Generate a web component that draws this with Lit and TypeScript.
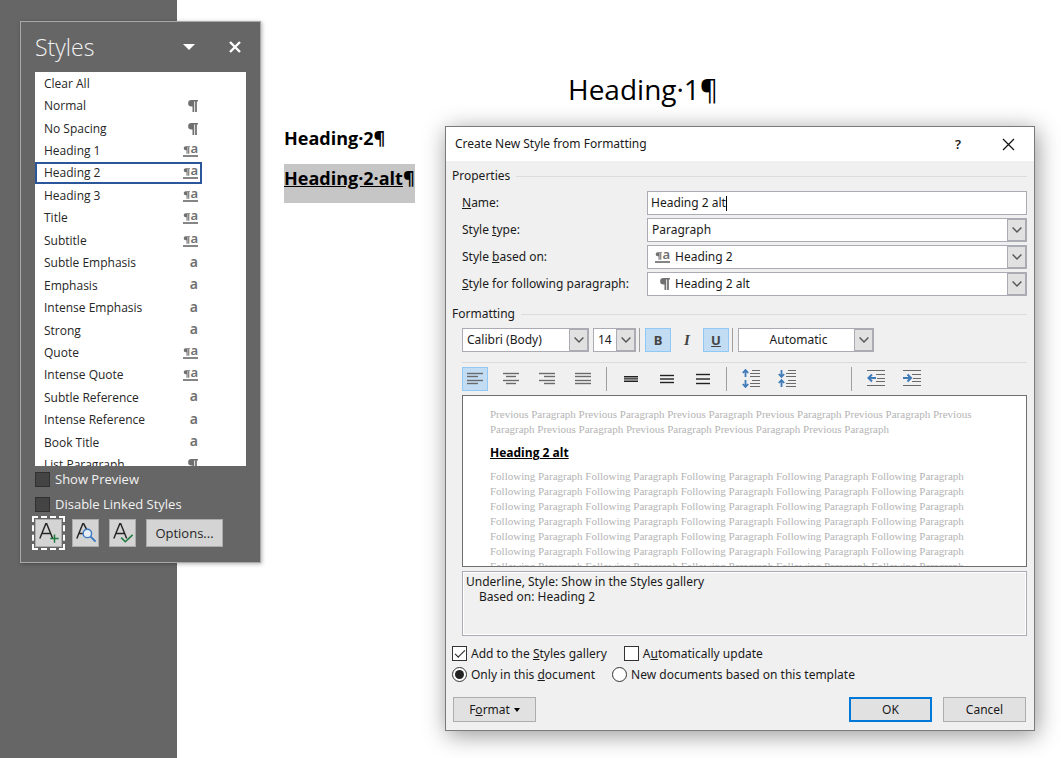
import { LitElement, html, svg, css, nothing } from "lit";
import { customElement, property, state } from "lit/decorators.js";
import { classMap } from "lit/directives/class-map.js";

type Kind = "none" | "para" | "linked" | "char";

const STYLES: Array<[string, Kind]> = [
  ["Clear All", "none"],
  ["Normal", "para"],
  ["No Spacing", "para"],
  ["Heading 1", "linked"],
  ["Heading 2", "linked"],
  ["Heading 3", "linked"],
  ["Title", "linked"],
  ["Subtitle", "linked"],
  ["Subtle Emphasis", "char"],
  ["Emphasis", "char"],
  ["Intense Emphasis", "char"],
  ["Strong", "char"],
  ["Quote", "linked"],
  ["Intense Quote", "linked"],
  ["Subtle Reference", "char"],
  ["Intense Reference", "char"],
  ["Book Title", "char"],
  ["List Paragraph", "para"],
];

/** Small mark telling paragraph, character and linked styles apart. */
@customElement("style-mark")
export class StyleMark extends LitElement {
  @property() kind: Kind = "none";

  static styles = css`
    :host {
      display: flex;
      justify-content: flex-end;
      width: 16px;
      color: #707070;
      font: 600 14px/16px "Noto Sans", sans-serif;
    }
    .pilcrow {
      display: block;
    }
    .linked {
      font-size: 13px;
      line-height: 10px;
      height: 10px;
      display: flex;
      align-items: center;
      border-bottom: 2px solid #858585;
    }
    .linked .glyph {
      padding-bottom: 4px;
    }
    .letter {
      height: 16px;
      margin-top: -3px;
    }
  `;

  private pilcrow(w: number, h: number) {
    return html`<svg class="pilcrow" width=${w} height=${h} viewBox="0 0 10 11">
      <path d="M4 0H10V1.3H9V11H7.4V1.3H6.600V11H5V6H4A3 3 0 0 1 4 0Z" fill="currentColor" />
    </svg>`;
  }

  render() {
    if (this.kind === "para") return this.pilcrow(11, 12);
    if (this.kind === "char") return html`<span class="letter">a</span>`;
    if (this.kind === "linked") return html`<span class="linked">${this.pilcrow(7, 8)}<span class="glyph">a</span></span>`;
    return nothing;
  }
}

@customElement("styles-pane")
export class StylesPane extends LitElement {
  @state() private selected = "Heading 2";

  static styles = css`
    :host {
      display: block;
      box-sizing: border-box;
      border: 1px solid #a8a8a8;
      background: #666;
      box-shadow: 1px 1px 4px rgba(0, 0, 0, 0.3);
      padding: 0 14px 15px;
      color: #f2f2f2;
      font: 12px/16px "Open Sans", sans-serif;
    }
    button {
      font: inherit;
      margin: 0;
      padding: 0;
    }
    header {
      display: flex;
      align-items: center;
      height: 50px;
      gap: 32px;
    }
    h2 {
      flex: 1;
      margin: 0;
      font-size: 23px;
      font-weight: 300;
      line-height: 28px;
    }
    .plain {
      display: grid;
      place-items: center;
      width: 14px;
      height: 14px;
      border: 0;
      background: none;
      color: #fff;
    }
    .plain:last-child {
      margin-right: 4px;
    }
    .view {
      height: 394px;
      overflow: hidden;
      background: #fff;
    }
    ul {
      display: flex;
      flex-direction: column;
      height: 404px;
      margin: 0;
      padding: 0;
      list-style: none;
    }
    li {
      flex: 1;
      display: flex;
    }
    .item {
      display: flex;
      align-items: center;
      justify-content: space-between;
      width: 167px;
      border: 2px solid transparent;
      padding: 1px 2px 0 7px;
      background: none;
      color: #262626;
      text-align: left;
    }
    .item.on {
      border-color: #2b579a;
    }
    .checks {
      display: grid;
      gap: 9px;
      padding-top: 5px;
    }
    label {
      display: flex;
      align-items: center;
      gap: 5px;
      font-size: 13px;
    }
    input {
      appearance: none;
      box-sizing: border-box;
      width: 15px;
      height: 15px;
      margin: 0;
      border: 1px solid #303030;
      background: #444;
    }
    input:checked {
      background: #ddd;
    }
    .actions {
      display: flex;
      gap: 10px;
      padding-top: 7px;
    }
    .tool,
    .options {
      display: grid;
      place-items: center;
      height: 28px;
      border: 1px solid #ababab;
      background: #d4d4d4;
      color: #262626;
    }
    .tool {
      width: 27px;
    }
    .tool.focus {
      outline: 2px dashed #fff;
      outline-offset: 1px;
    }
    .options {
      width: 77px;
      font-size: 13px;
    }
  `;

  render() {
    const letter = svg`<path d="M2 18 8.5 2h1L16 18M4.4 12.5h9.2" fill="none" stroke="#262626" stroke-width="1.6" />`;
    const shortLetter = svg`<path d="M2 18 8.5 2h1l3.200 6M4.400 12.500h4.200" fill="none" stroke="#262626" stroke-width="1.6" />`;
    return html`
      <header>
        <h2>Styles</h2>
        <button class="plain" aria-label="Task pane options">
          <svg width="12" height="6" viewBox="0 0 12 6"><path d="M0 0h12L6 6Z" fill="currentColor" /></svg>
        </button>
        <button class="plain" aria-label="Close">
          <svg width="12" height="12" viewBox="0 0 12 12">
            <path d="M1 1 11 11M11 1 1 11" stroke="currentColor" stroke-width="2.4" />
          </svg>
        </button>
      </header>
      <div class="view">
        <ul>
          ${STYLES.map(
            ([name, kind]) => html`<li>
              <button
                class=${classMap({ item: true, on: name === this.selected })}
                @click=${() => (this.selected = name)}
              >
                <span>${name}</span><style-mark .kind=${kind}></style-mark>
              </button>
            </li>`
          )}
        </ul>
      </div>
      <div class="checks">
        <label><input type="checkbox" />Show Preview</label>
        <label><input type="checkbox" />Disable Linked Styles</label>
      </div>
      <div class="actions">
        <button class="tool focus" aria-label="New Style">
          <svg width="22" height="22" viewBox="0 0 24 24">
            ${letter}<path d="M18 13.5v9M13.5 18h9" stroke="#1e7b3e" stroke-width="1.6" />
          </svg>
        </button>
        <button class="tool" aria-label="Style Inspector">
          <svg width="22" height="22" viewBox="0 0 24 24">
            ${shortLetter}
            <circle cx="13.5" cy="12.5" r="4.6" fill="#e8eef6" stroke="#3b78c3" stroke-width="1.5" />
            <path d="m17 16 5.5 5.5" stroke="#3b78c3" stroke-width="2" />
          </svg>
        </button>
        <button class="tool" aria-label="Manage Styles">
          <svg width="22" height="22" viewBox="0 0 24 24">
            ${letter}<path d="m10 17 4.5 4.5L22.5 14" fill="none" stroke="#1e7b3e" stroke-width="1.7" />
          </svg>
        </button>
        <button class="options">Options...</button>
      </div>
    `;
  }
}

/** Drop-down with an optional style mark before its value. */
@customElement("drop-down")
export class DropDown extends LitElement {
  @property() value = "";
  @property() name = "";
  @property() mark: Kind = "none";
  @property({ type: Boolean }) centered = false;

  static styles = css`
    :host {
      display: grid;
      box-sizing: border-box;
      height: 24px;
      border: 1px solid #ababb3;
      background: #fff;
      grid-template-columns: minmax(0, 1fr) 19px;
    }
    select {
      grid-area: 1 / 1 / 2 / 3;
      appearance: none;
      border: 0;
      margin: 0;
      padding: 0 19px 0 4px;
      background: none;
      color: #1a1a1a;
      font: 12px/20px "Noto Sans", sans-serif;
      outline: 0;
    }
    select.marked {
      padding-left: 27px;
    }
    select.centered {
      text-align: center;
      text-align-last: center;
    }
    style-mark {
      grid-area: 1 / 1;
      align-self: center;
      margin-left: 6px;
      pointer-events: none;
    }
    .arrow {
      grid-area: 1 / 2;
      display: grid;
      place-items: center;
      border: 1px solid #ababb3;
      background: #e1e1e1;
      pointer-events: none;
    }
  `;

  render() {
    return html`
      <select
        aria-label=${this.name}
        class=${classMap({ marked: this.mark !== "none", centered: this.centered })}
      >
        <option>${this.value}</option>
      </select>
      ${this.mark === "none" ? nothing : html`<style-mark .kind=${this.mark}></style-mark>`}
      <span class="arrow">
        <svg width="10" height="6" viewBox="0 0 10 6">
          <path d="m.6.6 4.4 4.4L9.4.6" fill="none" stroke="#555" stroke-width="1.4" />
        </svg>
      </span>
    `;
  }
}

const bars = (rows: Array<[number, number, number]>, color: string, width = 1) =>
  rows.map(
    ([x1, x2, y]) => svg`<path d=${`M${x1} ${y + 0.5}H${x2}`} stroke=${color} stroke-width=${width} />`
  );

const UP = (x: number, y: number) =>
  svg`<path d=${`M${x} ${y + 8}V${y + 2}M${x - 2.7} ${y + 4}L${x} ${y + 1}L${x + 2.7} ${y + 4}`} fill="none" stroke="#3e7ab8" stroke-width="1.8" />`;
const DOWN = (x: number, y: number) =>
  svg`<path d=${`M${x} ${y}V${y + 6}M${x - 2.7} ${y + 4}L${x} ${y + 7}L${x + 2.7} ${y + 4}`} fill="none" stroke="#3e7ab8" stroke-width="1.8" />`;

const GREY = "#6a6a6a";
const LINES: Array<[number, number, number]> = [
  [10, 18, 1], [8, 18, 4], [8, 18, 7], [10, 18, 11], [8, 18, 14], [8, 18, 17],
];

const ICONS = {
  left: bars([[1, 17, 4], [1, 12, 7], [1, 17, 11], [1, 12, 14]], GREY, 1.4),
  center: bars([[1, 17, 4], [4, 14, 7], [1, 17, 11], [4, 14, 14]], GREY, 1.4),
  right: bars([[1, 17, 4], [6, 17, 7], [1, 17, 11], [6, 17, 14]], GREY, 1.4),
  justify: bars([[1, 17, 4], [1, 17, 7], [1, 17, 11], [1, 17, 14]], GREY, 1.4),
  single: [
    svg`<rect x="2" y="7" width="14" height="6" fill="#8a8a8a" />`,
    ...bars([[2, 16, 7], [2, 16, 12]], "#222"),
    ...bars([[2, 16, 9]], "#555"),
  ],
  oneHalf: bars([[2, 16, 6], [2, 16, 9.5], [2, 16, 13]], "#222", 1.4),
  double: bars([[2, 16, 5], [2, 16, 9.5], [2, 16, 14]], "#222", 1.4),
  more: [UP(3.5, 0), DOWN(3.5, 11), ...bars(LINES, GREY)],
  less: [DOWN(3.5, 1), UP(3.5, 10), ...bars(LINES, GREY)],
  outdent: [
    svg`<path d="M9 9H2.500M5 5.500 1.500 9 5 12.500" fill="none" stroke="#3e7ab8" stroke-width="2" />`,
    ...bars([[0, 18, 1], [9, 18, 5], [10, 18, 9], [9, 18, 12], [0, 18, 16]], GREY),
  ],
  indent: [
    svg`<path d="M0 9H6.500M4.500 5.500 8 9 4.500 12.500" fill="none" stroke="#3e7ab8" stroke-width="2" />`,
    ...bars([[0, 18, 1], [9, 18, 5], [10, 18, 9], [9, 18, 12], [0, 18, 16]], GREY),
  ],
};

@customElement("style-dialog")
export class StyleDialog extends LitElement {
  @state() private align = "left";

  static styles = css`
    :host {
      display: block;
      box-sizing: border-box;
      border: 1px solid #7a7a7a;
      background: #f0f0f0;
      box-shadow: 2px 4px 22px rgba(0, 0, 0, 0.42);
      color: #1a1a1a;
      font: 12px/16px "Noto Sans", sans-serif;
    }
    button,
    input {
      font: inherit;
      color: inherit;
      margin: 0;
      padding: 0;
    }
    .bar {
      display: flex;
      align-items: center;
      gap: 36px;
      height: 34px;
      padding: 0 19px 0 9px;
      background: #fff;
    }
    h1 {
      flex: 1;
      margin: 0;
      font: inherit;
    }
    .plain {
      display: grid;
      place-items: center;
      width: 14px;
      height: 16px;
      border: 0;
      background: none;
      font-weight: 600;
      font-size: 13px;
    }
    .body {
      padding: 7px 7px 8px 6px;
    }
    .legend {
      display: flex;
      align-items: center;
      gap: 6px;
      margin: 0;
      font: inherit;
    }
    .legend::after {
      content: "";
      flex: 1;
      border-top: 1px solid #dcdcdc;
    }
    .fields {
      display: grid;
      grid-template-columns: 185px minmax(0, 1fr);
      row-gap: 3px;
      align-items: center;
      padding: 7px 0 10px 10px;
    }
    .text {
      display: flex;
      align-items: center;
      box-sizing: border-box;
      height: 24px;
      padding-left: 3px;
      border: 1px solid #ababb3;
      background: #fff;
    }
    .text input {
      field-sizing: content;
      border: 0;
      background: none;
      outline: 0;
    }
    .caret {
      width: 1px;
      height: 15px;
      background: #000;
    }
    .inset {
      padding-left: 10px;
    }
    .row {
      display: flex;
      align-items: center;
    }
    .fonts {
      padding: 6px 0 10px;
      border-bottom: 1px solid #dcdcdc;
    }
    .family {
      width: 127px;
    }
    .size {
      width: 43px;
      margin-left: 4px;
    }
    .color {
      width: 136px;
    }
    .sep {
      width: 1px;
      height: 24px;
      background: #a0a0a0;
    }
    .fonts .sep {
      margin: 0 5px 0 3px;
    }
    .toggle {
      display: grid;
      place-items: center;
      box-sizing: border-box;
      width: 26px;
      height: 24px;
      border: 1px solid transparent;
      background: none;
      color: #444;
      font-size: 13px;
    }
    .toggle.on {
      border-color: #90c8f6;
      background: #c2dcf3;
    }
    .toggles {
      display: flex;
      gap: 3px;
    }
    .bold {
      font-weight: 700;
    }
    .italic {
      font: italic bold 15px/18px "Liberation Serif", serif;
    }
    .under {
      font-weight: 700;
      text-decoration: underline;
    }
    .para {
      padding: 4px 0;
    }
    .group {
      display: flex;
      gap: 10px;
    }
    .group + .sep {
      margin: 0 11px 0 10px;
    }
    .last + .sep {
      margin-left: 51px;
    }
    .preview {
      box-sizing: border-box;
      height: 172px;
      overflow: hidden;
      border: 1px solid #6e6e6e;
      background: #fff;
      padding: 11px 40px 0 27px;
      color: #b4b4b4;
      font: 11px/15px "Liberation Serif", serif;
    }
    .preview p {
      margin: 0;
    }
    .preview .sample {
      margin: 8px 0;
      color: #000;
      font: bold 12px/16px "Open Sans", sans-serif;
      text-decoration: underline;
    }
    .about {
      box-sizing: border-box;
      height: 65px;
      margin-top: 4px;
      padding: 2px 3px;
      border: 1px solid #ababb3;
      outline: 1px solid #fff;
      outline-offset: -2px;
      line-height: 15px;
    }
    .about p {
      margin: 0;
    }
    .about p + p {
      padding-left: 13px;
    }
    .checks {
      display: grid;
      gap: 4px;
      padding: 9px 0 14px;
    }
    .checks .row {
      gap: 17px;
    }
    label.tick {
      display: flex;
      align-items: center;
      gap: 4px;
      height: 17px;
    }
    .tick input {
      appearance: none;
      box-sizing: border-box;
      display: grid;
      place-items: center;
      width: 15px;
      height: 15px;
      border: 1px solid #333;
      background: #fff;
    }
    .tick input[type="radio"] {
      border-radius: 50%;
    }
    .tick input[type="radio"]:checked::after {
      content: "";
      width: 9px;
      height: 9px;
      border-radius: 50%;
      background: #222;
    }
    .tick input[type="checkbox"]:checked::after {
      content: "";
      width: 9px;
      height: 4px;
      margin-top: -3px;
      border: solid #222;
      border-width: 0 0 1px 1px;
      transform: rotate(-45deg);
    }
    .foot {
      display: flex;
      align-items: center;
      gap: 11px;
      padding: 0 1px;
    }
    .push {
      display: flex;
      align-items: center;
      justify-content: center;
      gap: 4px;
      box-sizing: border-box;
      width: 83px;
      height: 25px;
      border: 1px solid #adadad;
      background: #e1e1e1;
    }
    .push.default {
      margin-left: auto;
      border: 2px solid #0078d7;
    }
  `;

  private icon(name: keyof typeof ICONS) {
    return html`<svg width="18" height="20" viewBox="0 0 18 20">${ICONS[name]}</svg>`;
  }

  private tool(name: keyof typeof ICONS, label: string) {
    return html`<button
      class=${classMap({ toggle: true, on: name === this.align })}
      aria-label=${label}
      @click=${() => (this.align = name)}
    >
      ${this.icon(name)}
    </button>`;
  }

  render() {
    return html`
      <div class="bar">
        <h1>Create New Style from Formatting</h1>
        <button class="plain" aria-label="Help">?</button>
        <button class="plain" aria-label="Close">
          <svg width="13" height="13" viewBox="0 0 13 13">
            <path d="m1 1 11 11M12 1 1 12" stroke="#111" stroke-width="1.2" />
          </svg>
        </button>
      </div>
      <div class="body">
        <h2 class="legend">Properties</h2>
        <div class="fields">
          <label for="name"><u>N</u>ame:</label>
          <div class="text"><input id="name" value="Heading 2 alt" /><span class="caret"></span></div>
          <label for="type">Style <u>t</u>ype:</label>
          <drop-down id="type" name="Style type" value="Paragraph"></drop-down>
          <label for="base">Style <u>b</u>ased on:</label>
          <drop-down id="base" name="Style based on" value="Heading 2" mark="linked"></drop-down>
          <label for="next"><u>S</u>tyle for following paragraph:</label>
          <drop-down id="next" name="Style for following paragraph" value="Heading 2 alt" mark="para"></drop-down>
        </div>
        <h2 class="legend">Formatting</h2>
        <div class="inset">
          <div class="row fonts">
            <drop-down class="family" name="Font" value="Calibri (Body)"></drop-down>
            <drop-down class="size" name="Font size" value="14"></drop-down>
            <span class="sep"></span>
            <span class="toggles">
              <button class="toggle on bold" aria-label="Bold">B</button>
              <button class="toggle italic" aria-label="Italic">I</button>
              <button class="toggle on under" aria-label="Underline">U</button>
            </span>
            <span class="sep"></span>
            <drop-down class="color" name="Font color" value="Automatic" centered></drop-down>
          </div>
          <div class="row para">
            <div class="group">
              ${this.tool("left", "Align left")} ${this.tool("center", "Center")}
              ${this.tool("right", "Align right")} ${this.tool("justify", "Justify")}
            </div>
            <span class="sep"></span>
            <div class="group">
              ${this.tool("single", "Single spacing")} ${this.tool("oneHalf", "1.5 spacing")}
              ${this.tool("double", "Double spacing")}
            </div>
            <span class="sep"></span>
            <div class="group last">
              ${this.tool("more", "Increase paragraph spacing")}
              ${this.tool("less", "Decrease paragraph spacing")}
            </div>
            <span class="sep"></span>
            <div class="group">
              ${this.tool("outdent", "Decrease indent")} ${this.tool("indent", "Increase indent")}
            </div>
          </div>
          <div class="preview">
            <p>${Array(10).fill("Previous Paragraph").join(" ")}</p>
            <p class="sample">Heading 2 alt</p>
            <p>${Array(35).fill("Following Paragraph").join(" ")}</p>
          </div>
          <div class="about">
            <p>Underline, Style: Show in the Styles gallery</p>
            <p>Based on: Heading 2</p>
          </div>
        </div>
        <div class="checks">
          <div class="row">
            <label class="tick"><input type="checkbox" checked /><span>Add to the <u>S</u>tyles gallery</span></label>
            <label class="tick"><input type="checkbox" /><span>A<u>u</u>tomatically update</span></label>
          </div>
          <div class="row">
            <label class="tick"><input type="radio" name="scope" checked /><span>Only in this <u>d</u>ocument</span></label>
            <label class="tick"><input type="radio" name="scope" /><span>New documents based on this template</span></label>
          </div>
        </div>
        <div class="foot">
          <button class="push">
            <span>F<u>o</u>rmat</span>
            <svg width="6" height="4" viewBox="0 0 6 4"><path d="M0 0h6L3 4Z" fill="#000" /></svg>
          </button>
          <button class="push default">OK</button>
          <button class="push">Cancel</button>
        </div>
      </div>
    `;
  }
}

@customElement("app-root")
export class AppRoot extends LitElement {
  static styles = css`
    :host {
      display: grid;
      grid-template-columns: 177px minmax(0, 1fr);
      position: relative;
      min-height: 100vh;
      background: #fff;
      overflow: hidden;
      color: #000;
      font-family: "Open Sans", sans-serif;
    }
    .gutter {
      background: #666;
    }
    .page {
      padding: 69px 0 0 107px;
    }
    .page p {
      margin: 0;
    }
    .page .h1 {
      padding-left: 284px;
      font-size: 28px;
      line-height: 40px;
    }
    .page .h2 {
      font-size: 18px;
      font-weight: 700;
      line-height: 24px;
      padding: 17px 0 14px;
    }
    .page .alt {
      width: fit-content;
      font-size: 18px;
      font-weight: 700;
      line-height: 28px;
      padding-bottom: 11px;
      background: #c6c6c6;
    }
    .pane {
      position: absolute;
      left: 20px;
      top: 21px;
      width: 241px;
    }
    .dialog {
      position: absolute;
      left: 445px;
      right: 26px;
      top: 126px;
    }
  `;

  render() {
    return html`
      <div class="gutter"></div>
      <main class="page">
        <p class="h1">Heading·1¶</p>
        <p class="h2">Heading·2¶</p>
        <p class="alt"><u>Heading·2·alt</u>¶</p>
      </main>
      <styles-pane class="pane"></styles-pane>
      <style-dialog class="dialog"></style-dialog>
    `;
  }
}
